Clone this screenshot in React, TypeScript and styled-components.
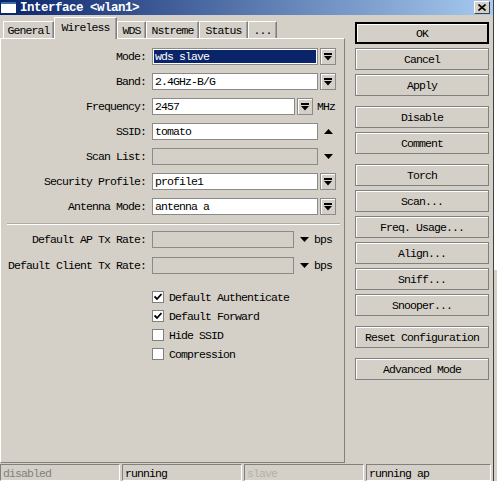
import React from 'react';
import styled, { createGlobalStyle } from 'styled-components';

const GlobalStyle = createGlobalStyle`
  html, body {
    margin: 0;
    padding: 0;
    background: #d4d0c8;
  }
  body {
    font-family: "Liberation Mono", "DejaVu Sans Mono", monospace;
    font-size: 11.5px;
    letter-spacing: -0.9px;
    color: #000;
  }
`;

const Screen = styled.div`
  display: flex;
  width: 497px;
  height: 481px;
  overflow: hidden;
`;

const Window = styled.div`
  width: 494px;
  flex: none;
  display: flex;
  flex-direction: column;
  background: #d4d0c8;
  border-right: 1px solid #404040;
  box-sizing: border-box;
`;

const Edge = styled.div`
  flex: 1;
  background: linear-gradient(#ffffff 0 270px, #d4d0c8 270px);
`;

const TitleBar = styled.div`
  height: 15px;
  flex: none;
  display: flex;
  align-items: center;
  padding-right: 3px;
  background: linear-gradient(to right, #0a246a, #a6caf0);
`;

const TitleIcon = styled.div`
  width: 15px;
  height: 11px;
  margin-left: 1px;
  background: #fff;
  border-top: 2px solid #3a6ea5;
  box-sizing: border-box;
`;

const TitleText = styled.div`
  margin-left: 4px;
  color: #fff;
  font-weight: bold;
  font-size: 12.5px;
  letter-spacing: -0.5px;
`;

const CloseButton = styled.div`
  margin-left: auto;
  width: 16px;
  height: 13px;
  box-sizing: border-box;
  background: #d4d0c8;
  border: 1px solid;
  border-color: #fff #404040 #404040 #fff;
  display: flex;
  align-items: center;
  justify-content: center;
`;

const Body = styled.div`
  flex: 1;
  display: flex;
  padding: 2px 0 1px;
  min-height: 0;
`;

const LeftColumn = styled.div`
  width: 345px;
  display: flex;
  flex-direction: column;
`;

const TabRow = styled.div`
  height: 21px;
  display: flex;
  align-items: flex-end;
  padding-left: 3px;
  position: relative;
  z-index: 1;
`;

const Tab = styled.div<{ $w: number; $active?: boolean }>`
  width: ${(p) => p.$w}px;
  height: ${(p) => (p.$active ? 22 : 17)}px;
  margin-bottom: ${(p) => (p.$active ? -1 : 0)}px;
  box-sizing: border-box;
  display: flex;
  align-items: center;
  justify-content: center;
  padding-bottom: ${(p) => (p.$active ? 3 : 0)}px;
  background: #d4d0c8;
  border: 1px solid;
  border-bottom: none;
  border-color: #fff #808080 transparent #fff;
  box-shadow: inset -1px 0 0 #a0a0a0;
`;

const Panel = styled.div`
  flex: 1;
  box-sizing: border-box;
  border: 1px solid;
  border-color: #fff #808080 #808080 #fff;
  padding-top: 9px;
  display: flex;
  flex-direction: column;
`;

const Rows = styled.div<{ $gap: number }>`
  display: flex;
  flex-direction: column;
  gap: ${(p) => p.$gap}px;
`;

const Row = styled.div`
  height: 17px;
  display: flex;
  align-items: center;
`;

const Label = styled.div`
  width: 145px;
  margin-right: 6px;
  text-align: right;
  white-space: nowrap;
`;

const Field = styled.div<{ $w: number; $disabled?: boolean }>`
  width: ${(p) => p.$w}px;
  height: 17px;
  box-sizing: border-box;
  border: 1px solid #8a8a8a;
  background: ${(p) => (p.$disabled ? '#d4d0c8' : '#fff')};
  display: flex;
  align-items: center;
  padding: 1px;
`;

const FieldText = styled.span<{ $selected?: boolean }>`
  flex: 1;
  height: 100%;
  display: flex;
  align-items: center;
  padding-left: 1px;
  background: ${(p) => (p.$selected ? '#0a246a' : 'transparent')};
  color: ${(p) => (p.$selected ? '#fff' : '#000')};
`;

const DropButton = styled.div`
  width: 16px;
  height: 17px;
  margin-left: 2px;
  box-sizing: border-box;
  border: 1px solid #8a8a8a;
  box-shadow: inset 1px 1px 0 #fff;
  display: flex;
  align-items: center;
  justify-content: center;
`;

const Arrow = styled.div<{ $ml: number }>`
  margin-left: ${(p) => p.$ml}px;
  display: flex;
  align-items: center;
`;

const Unit = styled.span<{ $ml: number }>`
  margin-left: ${(p) => p.$ml}px;
`;

const Separator = styled.div`
  height: 0;
  margin: 8px 4px 6px 6px;
  border-top: 1px solid #b0aca4;
  border-bottom: 1px solid #fff;
`;

const Checks = styled.div`
  display: flex;
  flex-direction: column;
  gap: 7px;
  padding: 17px 0 0 151px;
`;

const CheckRow = styled.div`
  height: 12px;
  display: flex;
  align-items: center;
`;

const Box = styled.div`
  width: 12px;
  height: 12px;
  box-sizing: border-box;
  border: 1px solid #808080;
  background: #fff;
  display: flex;
  align-items: center;
  justify-content: center;
`;

const CheckLabel = styled.span`
  margin-left: 5px;
`;

const ButtonColumn = styled.div`
  width: 134px;
  margin-left: 10px;
  padding-top: 5px;
  display: flex;
  flex-direction: column;
`;

const Button = styled.div<{ $group?: boolean; $default?: boolean }>`
  height: 22px;
  margin-top: ${(p) => (p.$group ? 10 : 4)}px;
  box-sizing: border-box;
  display: flex;
  align-items: center;
  justify-content: center;
  border: ${(p) => (p.$default ? '2px solid #000' : '1px solid #808080')};
  box-shadow: inset 1px 1px 0 #fff;
  &:first-child {
    margin-top: 0;
  }
`;

const StatusBar = styled.div`
  height: 17px;
  flex: none;
  display: flex;
  gap: 2px;
`;

const StatusCell = styled.div<{ $w: number; $color: string }>`
  width: ${(p) => p.$w}px;
  box-sizing: border-box;
  border: 1px solid;
  border-color: #808080 #fff #fff #808080;
  padding: 2px 0 0 2px;
  color: ${(p) => p.$color};
  white-space: nowrap;
`;

const DropGlyph = () => (
  <svg width="8" height="8" viewBox="0 0 8 8">
    <rect x="0" y="0" width="8" height="2" fill="#000" />
    <path d="M0 3 H8 L4 7.5 Z" fill="#000" />
  </svg>
);

const Triangle = ({ up }: { up?: boolean }) => (
  <svg width="9" height="5" viewBox="0 0 9 5">
    <path d={up ? 'M0 5 H9 L4.5 0 Z' : 'M0 0 H9 L4.5 5 Z'} fill="#000" />
  </svg>
);

const CheckMark = () => (
  <svg width="8" height="8" viewBox="0 0 8 8">
    <path d="M0.5 3.5 L3 6 L7.5 1" stroke="#000" strokeWidth="1.8" fill="none" />
  </svg>
);

const tabs = [
  { name: 'General', w: 51 },
  { name: 'Wireless', w: 63, active: true },
  { name: 'WDS', w: 29 },
  { name: 'Nstreme', w: 53 },
  { name: 'Status', w: 49 },
  { name: '...', w: 29 },
];

const selects = [
  { label: 'Mode:', value: 'wds slave', selected: true },
  { label: 'Band:', value: '2.4GHz-B/G' },
];

const buttons = [
  { text: 'OK', isDefault: true },
  { text: 'Cancel' },
  { text: 'Apply' },
  { text: 'Disable', group: true },
  { text: 'Comment' },
  { text: 'Torch', group: true },
  { text: 'Scan...' },
  { text: 'Freq. Usage...' },
  { text: 'Align...' },
  { text: 'Sniff...' },
  { text: 'Snooper...' },
  { text: 'Reset Configuration', group: true },
  { text: 'Advanced Mode', group: true },
];

const checks = [
  { text: 'Default Authenticate', on: true },
  { text: 'Default Forward', on: true },
  { text: 'Hide SSID', on: false },
  { text: 'Compression', on: false },
];

const status = [
  { text: 'disabled', w: 120, color: '#808080' },
  { text: 'running', w: 120, color: '#000' },
  { text: 'slave', w: 120, color: '#b4b0a8' },
  { text: 'running ap', w: 125, color: '#000' },
];

const App: React.FC = () => {
  return (
    <>
      <GlobalStyle />
      <Screen>
        <Window>
          <TitleBar>
            <TitleIcon />
            <TitleText>Interface &lt;wlan1&gt;</TitleText>
            <CloseButton>
              <svg width="8" height="7" viewBox="0 0 8 7">
                <path d="M0.5 0.5 L7.5 6.5 M7.5 0.5 L0.5 6.5" stroke="#000" strokeWidth="1.6" />
              </svg>
            </CloseButton>
          </TitleBar>
          <Body>
            <LeftColumn>
              <TabRow>
                {tabs.map((t) => (
                  <Tab key={t.name} $w={t.w} $active={t.active}>
                    {t.name}
                  </Tab>
                ))}
              </TabRow>
              <Panel>
                <Rows $gap={8}>
                  {selects.map((s) => (
                    <Row key={s.label}>
                      <Label>{s.label}</Label>
                      <Field $w={166}>
                        <FieldText $selected={s.selected}>{s.value}</FieldText>
                      </Field>
                      <DropButton>
                        <DropGlyph />
                      </DropButton>
                    </Row>
                  ))}
                  <Row>
                    <Label>Frequency:</Label>
                    <Field $w={143}>
                      <FieldText>2457</FieldText>
                    </Field>
                    <DropButton>
                      <DropGlyph />
                    </DropButton>
                    <Unit $ml={4}>MHz</Unit>
                  </Row>
                  <Row>
                    <Label>SSID:</Label>
                    <Field $w={166}>
                      <FieldText>tomato</FieldText>
                    </Field>
                    <Arrow $ml={6}>
                      <Triangle up />
                    </Arrow>
                  </Row>
                  <Row>
                    <Label>Scan List:</Label>
                    <Field $w={166} $disabled />
                    <Arrow $ml={6}>
                      <Triangle />
                    </Arrow>
                  </Row>
                  <Row>
                    <Label>Security Profile:</Label>
                    <Field $w={166}>
                      <FieldText>profile1</FieldText>
                    </Field>
                    <DropButton>
                      <DropGlyph />
                    </DropButton>
                  </Row>
                  <Row>
                    <Label>Antenna Mode:</Label>
                    <Field $w={166}>
                      <FieldText>antenna a</FieldText>
                    </Field>
                    <DropButton>
                      <DropGlyph />
                    </DropButton>
                  </Row>
                </Rows>
                <Separator />
                <Rows $gap={9}>
                  <Row>
                    <Label>Default AP Tx Rate:</Label>
                    <Field $w={142} $disabled />
                    <Arrow $ml={6}>
                      <Triangle />
                    </Arrow>
                    <Unit $ml={5}>bps</Unit>
                  </Row>
                  <Row>
                    <Label>Default Client Tx Rate:</Label>
                    <Field $w={142} $disabled />
                    <Arrow $ml={6}>
                      <Triangle />
                    </Arrow>
                    <Unit $ml={5}>bps</Unit>
                  </Row>
                </Rows>
                <Checks>
                  {checks.map((c) => (
                    <CheckRow key={c.text}>
                      <Box>{c.on && <CheckMark />}</Box>
                      <CheckLabel>{c.text}</CheckLabel>
                    </CheckRow>
                  ))}
                </Checks>
              </Panel>
            </LeftColumn>
            <ButtonColumn>
              {buttons.map((b) => (
                <Button key={b.text} $group={b.group} $default={b.isDefault}>
                  {b.text}
                </Button>
              ))}
            </ButtonColumn>
          </Body>
          <StatusBar>
            {status.map((s) => (
              <StatusCell key={s.text} $w={s.w} $color={s.color}>
                {s.text}
              </StatusCell>
            ))}
          </StatusBar>
        </Window>
        <Edge />
      </Screen>
    </>
  );
};

export default App;
